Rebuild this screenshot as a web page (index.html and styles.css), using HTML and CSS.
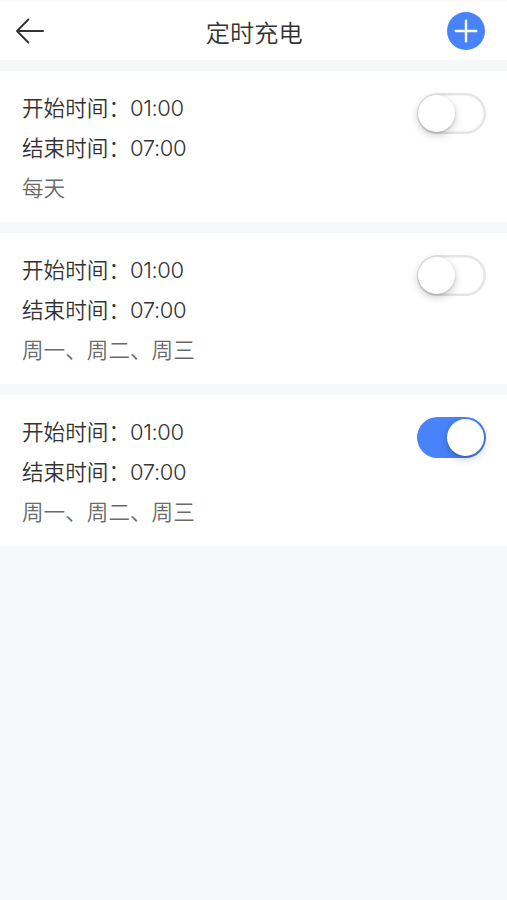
FILE: index.html
```html
<!DOCTYPE html>
<html lang="zh-CN">
<head>
    <meta charset="UTF-8">
    <meta name="viewport" content="width=device-width, initial-scale=1.0">
    <title>定时充电</title>
    <link rel="stylesheet" href="styles.css">
</head>
<body>
    <header class="header">
        <button type="button" class="icon-btn back-btn" aria-label="返回">
            <svg width="30" height="28" viewBox="0 0 30 28" fill="none" stroke="#333" stroke-width="1.9" stroke-linecap="round" stroke-linejoin="round">
                <path d="M13.3 2.5L2 14L13.3 25.5M2 14H28"/>
            </svg>
        </button>
        <h1 class="title">定时充电</h1>
        <button type="button" class="icon-btn add-btn" aria-label="添加">
            <svg width="38" height="38" viewBox="0 0 38 38" fill="none" stroke="#fff" stroke-width="2.4" stroke-linecap="round">
                <path d="M19 8.8V29.2M8.8 19H29.2"/>
            </svg>
        </button>
    </header>

    <main class="timer-list">
        <section class="timer">
            <div class="timer-info">
                <p class="line">开始时间：<span class="time">01:00</span></p>
                <p class="line">结束时间：<span class="time">07:00</span></p>
                <p class="line repeat">每天</p>
            </div>
            <label class="switch">
                <input type="checkbox" class="switch-input">
                <span class="knob"></span>
            </label>
        </section>

        <section class="timer">
            <div class="timer-info">
                <p class="line">开始时间：<span class="time">01:00</span></p>
                <p class="line">结束时间：<span class="time">07:00</span></p>
                <p class="line repeat">周一、周二、周三</p>
            </div>
            <label class="switch">
                <input type="checkbox" class="switch-input">
                <span class="knob"></span>
            </label>
        </section>

        <section class="timer">
            <div class="timer-info">
                <p class="line">开始时间：<span class="time">01:00</span></p>
                <p class="line">结束时间：<span class="time">07:00</span></p>
                <p class="line repeat">周一、周二、周三</p>
            </div>
            <label class="switch">
                <input type="checkbox" class="switch-input" checked>
                <span class="knob"></span>
            </label>
        </section>
    </main>
</body>
</html>
```
FILE: styles.css
```css
* {
    box-sizing: border-box;
}
body {
    margin: 0;
    min-height: 100vh;
    background-color: #f6f8fa;
    color: #333;
    font-family: "Noto Sans CJK SC", sans-serif;
}
.header {
    display: flex;
    justify-content: space-between;
    align-items: center;
    height: 60px;
    padding: 0 21.5px 0 15px;
    border-top: 2px solid #f9fafb;
    background-color: #fff;
}
.icon-btn {
    display: flex;
    justify-content: center;
    align-items: center;
    padding: 0;
    border: none;
    background: none;
    cursor: pointer;
}
.back-btn {
    width: 46px;
    justify-content: flex-start;
}
.add-btn {
    width: 38px;
    height: 38px;
    border-radius: 50%;
    background-color: #4883fb;
}
.title {
    margin: 0;
    padding-top: 2px;
    font-size: 24.2px;
    font-weight: 350;
    line-height: 36px;
}
.timer-list {
    display: flex;
    flex-direction: column;
    gap: 11px;
    padding-top: 11px;
}
.timer {
    display: flex;
    justify-content: space-between;
    align-items: flex-start;
    height: 151px;
    padding: 16px 21.5px 0 22px;
    background-color: #fff;
}
.line {
    margin: 0;
    font-size: 21.6px;
    font-weight: 350;
    line-height: 40px;
    white-space: nowrap;
}
.time {
    font-family: Inter, sans-serif;
    font-size: 22px;
    font-weight: 350;
    font-feature-settings: "calt" 0;
    letter-spacing: -0.4px;
    line-height: 1;
}
.repeat {
    color: #6a6a6a;
}
.switch {
    display: flex;
    align-items: center;
    width: 69px;
    height: 41px;
    margin-top: 6px;
    padding: 0 1.5px;
    border-radius: 21px;
    background-color: #fff;
    box-shadow: inset 0 0 0 2.5px #e5e5e5;
    cursor: pointer;
}
.switch-input {
    display: none;
}
.knob {
    width: 37px;
    height: 37px;
    border-radius: 50%;
    background-color: #fff;
    box-shadow: 0 3px 8px rgba(0, 0, 0, 0.22), 0 1px 2px rgba(0, 0, 0, 0.15);
}
.switch:has(:checked) {
    justify-content: flex-end;
    background-color: #4883fb;
    box-shadow: none;
}
```
